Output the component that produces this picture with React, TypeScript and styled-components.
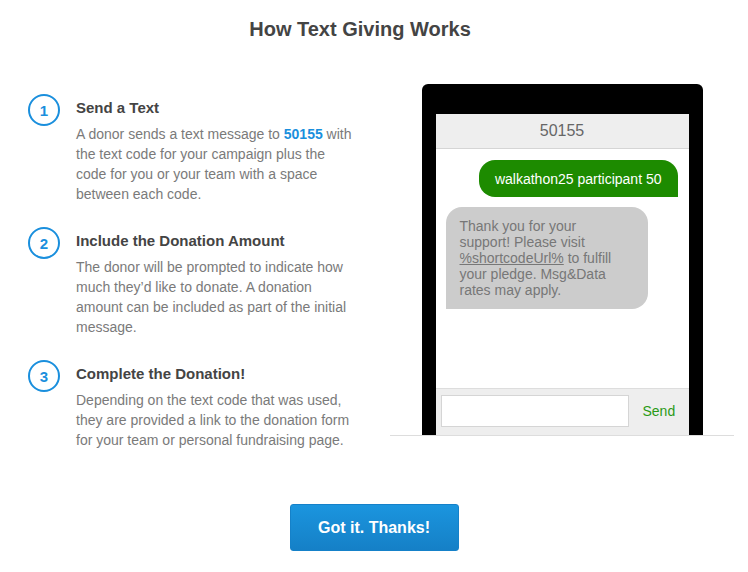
import styled, { createGlobalStyle } from "styled-components";

const GlobalStyle = createGlobalStyle`
  html, body {
    margin: 0;
    padding: 0;
    background: #fff;
    font-family: "Liberation Sans", Arial, Helvetica, sans-serif;
  }
`;

const Page = styled.div`
  width: 748px;
  height: 572px;
  padding-top: 17px;
  box-sizing: border-box;
  display: flex;
  flex-direction: column;
  align-items: center;
`;

const Title = styled.h1`
  margin: 0;
  padding-right: 28px;
  font-size: 20px;
  line-height: 24px;
  font-weight: bold;
  color: #444;
  text-align: center;
`;

const Content = styled.div`
  align-self: stretch;
  margin-top: 43px;
  display: flex;
  align-items: flex-start;
  padding-left: 28px;
`;

const Steps = styled.div`
  width: 362px;
  padding-top: 10px;
  display: flex;
  flex-direction: column;
  gap: 23px;
`;

const Step = styled.div`
  display: flex;
  gap: 16px;
`;

const Circle = styled.div`
  flex: none;
  width: 32px;
  height: 32px;
  box-sizing: border-box;
  border: 2px solid #1a8fdd;
  border-radius: 50%;
  display: flex;
  align-items: center;
  justify-content: center;
  color: #1a8fdd;
  font-size: 15px;
  font-weight: bold;
`;

const StepText = styled.div`
  padding-top: 4px;
  width: 280px;
`;

const StepTitle = styled.h3`
  margin: 0 0 6px;
  font-size: 15px;
  line-height: 20px;
  font-weight: bold;
  color: #444;
`;

const StepBody = styled.p`
  margin: 0;
  font-size: 14px;
  line-height: 20px;
  color: #7a7a7a;
`;

const Code = styled.strong`
  color: #1a8fdd;
`;

const PhoneArea = styled.div`
  width: 344px;
  height: 352px;
  box-sizing: border-box;
  border-bottom: 1px solid #ddd;
  display: flex;
  justify-content: center;
  overflow: hidden;
`;

const Phone = styled.div`
  width: 281px;
  box-sizing: border-box;
  padding: 30px 14px 0;
  background: #000;
  border-radius: 6px 6px 0 0;
  display: flex;
`;

const Screen = styled.div`
  flex: 1;
  background: #fff;
  display: flex;
  flex-direction: column;
`;

const ScreenHeader = styled.div`
  height: 34px;
  background: #eee;
  border-bottom: 1px solid #d5d5d5;
  display: flex;
  align-items: center;
  justify-content: center;
  font-size: 16px;
  color: #666;
`;

const Messages = styled.div`
  flex: 1;
  padding: 11px 11px 0 10px;
  display: flex;
  flex-direction: column;
  gap: 10px;
`;

const Bubble = styled.div<{ $sent?: boolean }>`
  font-size: 14px;
  box-sizing: border-box;
  ${({ $sent }) =>
    $sent
      ? `
    align-self: flex-end;
    background: #1d8b00;
    color: #fff;
    height: 37px;
    padding: 0 16px;
    display: flex;
    align-items: center;
    border-radius: 16px 16px 0 16px;
  `
      : `
    align-self: flex-start;
    width: 202px;
    background: #ccc;
    color: #777;
    line-height: 16px;
    padding: 11px 28px 11px 14px;
    border-radius: 16px 16px 16px 0;
  `}
`;

const Link = styled.span`
  text-decoration: underline;
`;

const Composer = styled.div`
  height: 47px;
  box-sizing: border-box;
  background: #eee;
  border-top: 1px solid #ddd;
  display: flex;
  align-items: flex-start;
  padding: 6px 12px 0 5px;
  gap: 14px;
`;

const Input = styled.div`
  width: 188px;
  height: 32px;
  box-sizing: border-box;
  background: #fff;
  border: 1px solid #d5d5d5;
`;

const SendLabel = styled.span`
  font-size: 14px;
  line-height: 32px;
  color: #2a9a16;
`;

const Button = styled.button`
  margin-top: 54px;
  width: 169px;
  height: 47px;
  border: 1px solid #1581c9;
  border-radius: 3px;
  background: linear-gradient(#1b95de, #1580c7);
  color: #fff;
  font-family: "Liberation Sans", Arial, sans-serif;
  font-size: 16px;
  font-weight: bold;
  cursor: pointer;
`;

const steps = [
  {
    title: "Send a Text",
    body: (
      <>
        A donor sends a text message to <Code>50155</Code> with the text code
        for your campaign plus the code for you or your team with a space
        between each code.
      </>
    ),
  },
  {
    title: "Include the Donation Amount",
    body: (
      <>
        The donor will be prompted to indicate how much they’d like to donate.
        A donation amount can be included as part of the initial message.
      </>
    ),
  },
  {
    title: "Complete the Donation!",
    body: (
      <>
        Depending on the text code that was used, they are provided a link to
        the donation form for your team or personal fundraising page.
      </>
    ),
  },
];

const App = () => {
  return (
    <>
      <GlobalStyle />
      <Page>
        <Title>How Text Giving Works</Title>
        <Content>
          <Steps>
            {steps.map((s, i) => (
              <Step key={s.title}>
                <Circle>{i + 1}</Circle>
                <StepText>
                  <StepTitle>{s.title}</StepTitle>
                  <StepBody>{s.body}</StepBody>
                </StepText>
              </Step>
            ))}
          </Steps>
          <PhoneArea>
            <Phone>
              <Screen>
                <ScreenHeader>50155</ScreenHeader>
                <Messages>
                  <Bubble $sent>walkathon25 participant 50</Bubble>
                  <Bubble>
                    Thank you for your support! Please visit{" "}
                    <Link>%shortcodeUrl%</Link> to fulfill your pledge.
                    Msg&amp;Data rates may apply.
                  </Bubble>
                </Messages>
                <Composer>
                  <Input />
                  <SendLabel>Send</SendLabel>
                </Composer>
              </Screen>
            </Phone>
          </PhoneArea>
        </Content>
        <Button>Got it. Thanks!</Button>
      </Page>
    </>
  );
};

export default App;
